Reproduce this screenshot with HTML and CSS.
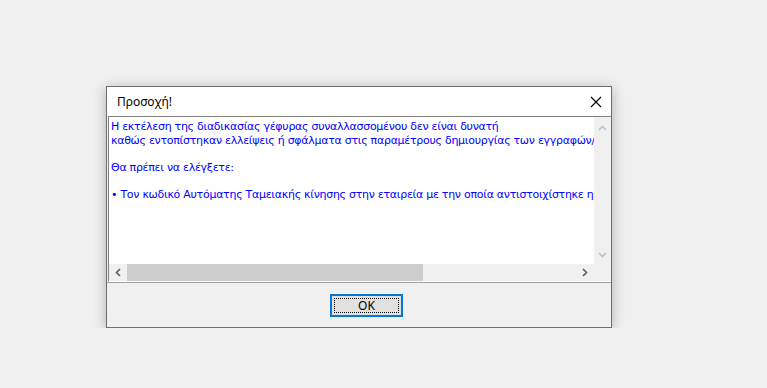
FILE: index.html
```html
<!DOCTYPE html>
<html lang="el">
<head>
  <meta charset="UTF-8" />
  <title>Προσοχή!</title>
  <link rel="stylesheet" href="styles.css">
</head>
<body>
  <div class="dialog">
    <div class="titlebar">
      <span class="title">Προσοχή!</span>
      <svg class="close" width="12" height="12" viewBox="0 0 12 12">
        <path d="M1 1 L11 11 M11 1 L1 11" stroke="#000" stroke-width="1.1" fill="none"/>
      </svg>
    </div>

    <div class="memo">
      <div class="memo-text">
        <div>Η εκτέλεση της διαδικασίας γέφυρας συναλλασσομένου δεν είναι δυνατή</div>
        <div>καθώς εντοπίστηκαν ελλείψεις ή σφάλματα στις παραμέτρους δημιουργίας των εγγραφών/</div>
        <div>&nbsp;</div>
        <div>Θα πρέπει να ελέγξετε:</div>
        <div>&nbsp;</div>
        <div>• Τον κωδικό Αυτόματης Ταμειακής κίνησης στην εταιρεία με την οποία αντιστοιχίστηκε η</div>
      </div>
      <div class="vscroll">
        <svg width="9" height="6" viewBox="0 0 9 6"><path d="M1 5 L4.5 1.5 L8 5" stroke="#c2c2c2" stroke-width="1.6" fill="none"/></svg>
        <svg width="9" height="6" viewBox="0 0 9 6"><path d="M1 1 L4.5 4.5 L8 1" stroke="#c2c2c2" stroke-width="1.6" fill="none"/></svg>
      </div>
      <div class="hscroll">
        <svg class="arrow" width="6" height="9" viewBox="0 0 6 9"><path d="M5 1 L1.5 4.5 L5 8" stroke="#606060" stroke-width="1.7" fill="none"/></svg>
        <div class="track"><div class="thumb"></div></div>
        <svg class="arrow" width="6" height="9" viewBox="0 0 6 9"><path d="M1 1 L4.5 4.5 L1 8" stroke="#606060" stroke-width="1.7" fill="none"/></svg>
      </div>
      <div class="corner"></div>
    </div>

    <div class="footer">
      <button class="ok"><span>OK</span></button>
    </div>
  </div>
</body>
</html>
```

FILE: styles.css
```css
body { margin: 0; background: #f0f0f0; font-family: "Liberation Sans", Arial, sans-serif; }
.dialog { width: 506px; height: 242px; margin: 86px 0 0 106px; box-sizing: border-box; border: 1px solid #6f6f6f; background: #f0f0f0; box-shadow: 0 2px 12px rgba(0,0,0,0.28); display: flex; flex-direction: column; }
.titlebar { height: 29px; background: #fff; display: flex; align-items: center; justify-content: space-between; padding: 0 9px 0 10px; }
.title { font-family: "Noto Sans", sans-serif; font-size: 12px; color: #000; }
.close { display: block; }
.memo { margin-left: 1px; border-top: 1px solid #828282; border-left: 1px solid #828282; border-bottom: 1px solid #fff; display: grid; grid-template-columns: 1fr 17px; grid-template-rows: 147px 17px; overflow: hidden; }
.memo-text { background: #fff; color: #0000ff; font-family: "DejaVu Sans", sans-serif; font-size: 11px; letter-spacing: -0.28px; line-height: 13.6px; padding: 3px 0 0 2px; white-space: nowrap; overflow: hidden; }
.vscroll { background: #f0f0f0; display: flex; flex-direction: column; justify-content: space-between; align-items: center; padding: 8px 0 6px; }
.vscroll svg { display: block; }
.hscroll { background: #f0f0f0; display: flex; align-items: center; }
.hscroll .arrow { display: block; margin: 0 6px; }
.track { flex: 1; height: 100%; }
.thumb { width: 296px; height: 100%; background: #cdcdcd; }
.corner { background: #f0f0f0; }
.footer { flex: 1; border-top: 1px solid #a0a0a0; padding: 11px 0 0 223px; }
.ok { width: 73px; height: 23px; padding: 2px; border: 2px solid #0078d7; background: #e1e1e1; font-family: "Noto Sans", sans-serif; font-size: 12px; color: #000; display: block; }
.ok span { display: flex; align-items: center; justify-content: center; height: 100%; box-sizing: border-box; border: 1px dotted #000; }
```
